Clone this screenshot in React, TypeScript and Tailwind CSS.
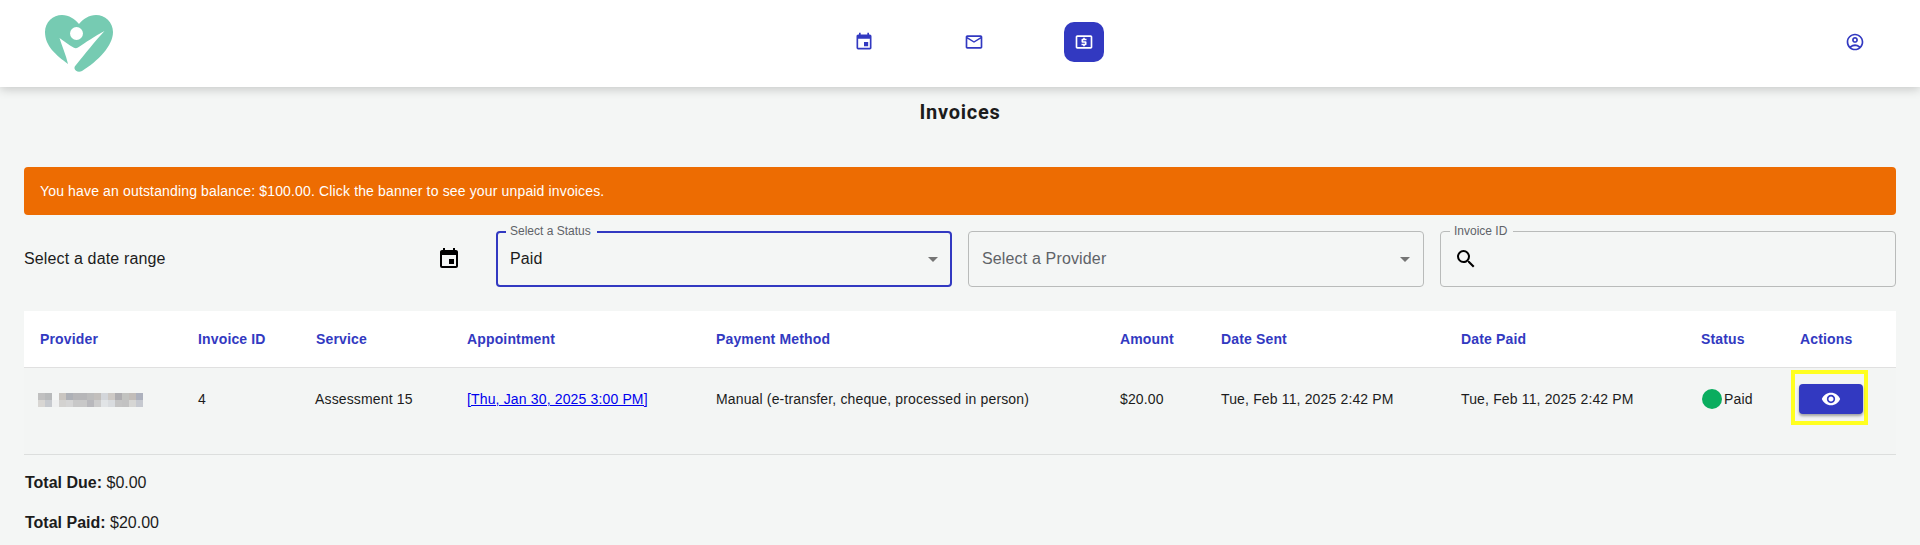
import { ReactNode } from "react";
import {
  MdEvent,
  MdMailOutline,
  MdOutlineLocalAtm,
  MdOutlineAccountCircle,
  MdSearch,
  MdArrowDropDown,
  MdVisibility,
} from "react-icons/md";

const topRow = [
  "bg-[#c0c0c0]", "bg-[#b8babb]", "bg-[#f4f6f5]", "bg-[#c9c5c0]", "bg-[#adb0b6]",
  "bg-[#b6b6b8]", "bg-[#b6b6b8]", "bg-[#bcbcbc]", "bg-[#c2bfbc]", "bg-[#d3d6da]",
  "bg-[#cdc9c5]", "bg-[#aeadb0]", "bg-[#c2c3c0]", "bg-[#c2bdb9]", "bg-[#adb1bd]",
];
const bottomRow = [
  "bg-[#d8d6d3]", "bg-[#c6c9ce]", "bg-[#eff0f0]", "bg-[#d3d2d0]", "bg-[#d5d5d5]",
  "bg-[#c8c8c8]", "bg-[#c8c8c8]", "bg-[#b8b8bc]", "bg-[#cccccc]", "bg-[#e1e4e6]",
  "bg-[#d9dcdf]", "bg-[#c4c4c4]", "bg-[#c2c2c2]", "bg-[#d6d6d4]", "bg-[#c6c9d0]",
];

const columns = [
  { label: "Provider", width: "w-[158px]" },
  { label: "Invoice ID", width: "w-[118px]" },
  { label: "Service", width: "w-[151px]" },
  { label: "Appointment", width: "w-[249px]" },
  { label: "Payment Method", width: "w-[404px]" },
  { label: "Amount", width: "w-[101px]" },
  { label: "Date Sent", width: "w-[240px]" },
  { label: "Date Paid", width: "w-[240px]" },
  { label: "Status", width: "w-[97px]" },
  { label: "Actions", width: "w-[114px]" },
];

function Logo() {
  return (
    <svg viewBox="44 15 72 60" className="w-[72px] h-[60px]">
      <path
        fill="#76cbb2"
        d="M68 65C56 56 45 47 45 33C45 23 53 16 62 16C69 16 75 20 79 25C83 20 89 16 96 16C105 16 113 23 113 33C113 47 98 62 82 72C79 73.5 75 72.5 74.5 69.5C74.3 68 75 67 76 66C85 55 95 42 104.5 32C95 37 85 44 78 48.5C76.5 49.5 75 49.5 73.5 48.5C69 46 64 42 59.5 39C62 47 66 56 68 65Z"
      />
      <circle cx="76.5" cy="34.5" r="6.5" fill="#ffffff" />
    </svg>
  );
}

function Outlined({ label, focused, children }: { label?: string; focused?: boolean; children: ReactNode }) {
  return (
    <div
      className={
        focused
          ? "relative h-14 rounded border-2 border-[#3239c1] flex items-center pl-[12px] pr-[5px]"
          : "relative h-14 rounded border border-[#b9bbba] flex items-center pl-[13px] pr-[6px]"
      }
    >
      {label && (
        <span
          className={
            focused
              ? "absolute -top-[10px] left-[8px] pl-[4px] pr-[6px] bg-[#f4f6f5] text-xs leading-4 text-[#5f6368]"
              : "absolute -top-[9px] left-[9px] pl-[4px] pr-[6px] bg-[#f4f6f5] text-xs leading-4 text-[#5f6368]"
          }
        >
          {label}
        </span>
      )}
      {children}
    </div>
  );
}

export default function App() {
  return (
    <div className="min-h-screen bg-[#f4f6f5] font-['Liberation_Sans',sans-serif] text-[#1c1c1c] overflow-hidden">
      <header className="relative h-[87px] bg-white shadow-[0_2px_10px_rgba(0,0,0,0.2)] flex items-center pl-[44px] pr-[55px]">
        <Logo />
        <nav className="absolute left-[844px] top-[22px] flex items-center text-[#3239c1]">
          <button className="w-10 h-10 flex items-center justify-center">
            <MdEvent size={20} />
          </button>
          <button className="ml-[70px] w-10 h-10 flex items-center justify-center">
            <MdMailOutline size={20} />
          </button>
          <button className="ml-[70px] w-10 h-10 rounded-[10px] bg-[#3239c1] text-white flex items-center justify-center">
            <MdOutlineLocalAtm size={20} />
          </button>
        </nav>
        <button className="ml-auto -mt-[3px] text-[#3239c1]">
          <MdOutlineAccountCircle size={20} />
        </button>
      </header>

      <main className="px-6">
        <div className="h-20 pt-[13px]">
          <h1 className="text-center text-[20px] leading-6 font-bold font-['Roboto',sans-serif] tracking-[0.75px]">Invoices</h1>
        </div>

        <div className="h-12 rounded bg-[#ed6c02] text-white text-sm tracking-[0.15px] flex items-center px-4 mb-4">
          You have an outstanding balance: $100.00. Click the banner to see your unpaid invoices.
        </div>

        <div className="grid grid-cols-4 gap-4 mb-6">
          <div className="h-14 flex items-center justify-between pr-[19px]">
            <span className="text-base tracking-[0.15px]">Select a date range</span>
            <MdEvent size={24} className="text-black" />
          </div>
          <Outlined label="Select a Status" focused>
            <span className="text-base tracking-[0.15px] flex-1">Paid</span>
            <MdArrowDropDown size={24} className="text-[#757575]" />
          </Outlined>
          <Outlined>
            <span className="text-base tracking-[0.15px] flex-1 text-[#5f6368]">Select a Provider</span>
            <MdArrowDropDown size={24} className="text-[#757575]" />
          </Outlined>
          <Outlined label="Invoice ID">
            <MdSearch size={24} className="text-black" />
          </Outlined>
        </div>

        <table className="w-full table-fixed border-collapse text-sm tracking-[0.15px]">
          <colgroup>
            {columns.map((c) => (
              <col key={c.label} className={c.width} />
            ))}
          </colgroup>
          <thead>
            <tr className="bg-white border-b border-[#e0e0e0] h-14">
              {columns.map((c) => (
                <th
                  key={c.label}
                  className={
                    c.label === "Actions"
                      ? "pl-[18px] pt-[1px] text-left font-bold text-sm text-[#3239c1]"
                      : "px-4 pt-[1px] text-left font-bold text-sm text-[#3239c1]"
                  }
                >
                  {c.label}
                </th>
              ))}
            </tr>
          </thead>
          <tbody>
            <tr className="border-b border-[#dcdedd] bg-[#f3f5f4] h-[87px] align-top">
              <td className="pl-[14px] pt-[25px]">
                <div className="flex">
                  {topRow.map((c, i) => (
                    <div key={i} className={`w-[7px] h-[7px] ${c}`} />
                  ))}
                </div>
                <div className="flex">
                  {bottomRow.map((c, i) => (
                    <div key={i} className={`w-[7px] h-[7px] ${c}`} />
                  ))}
                </div>
              </td>
              <td className="px-4 pt-[21px] leading-5">4</td>
              <td className="pl-[15px] pr-4 pt-[21px] leading-5">Assessment 15</td>
              <td className="px-4 pt-[21px] leading-5">
                <a href="#" className="text-[#0000ee] underline whitespace-nowrap">[Thu, Jan 30, 2025 3:00 PM]</a>
              </td>
              <td className="px-4 pt-[21px] leading-5">Manual (e-transfer, cheque, processed in person)</td>
              <td className="px-4 pt-[21px] leading-5">$20.00</td>
              <td className="px-4 pt-[21px] leading-5">Tue, Feb 11, 2025 2:42 PM</td>
              <td className="px-4 pt-[21px] leading-5">Tue, Feb 11, 2025 2:42 PM</td>
              <td className="pl-[17px] pt-[21px] leading-5">
                <div className="flex items-center gap-[2px]">
                  <span className="w-5 h-5 rounded-full bg-[#0aad5f]" />
                  Paid
                </div>
              </td>
              <td className="pl-[9px] pt-[2px]">
                <div className="inline-block border-4 border-[#ffff20] pl-[4px] pr-[1px] pt-[10px] pb-[7px]">
                  <button className="w-16 h-[30px] rounded bg-[#3239c1] text-white flex items-center justify-center shadow-[0_2px_3px_rgba(0,0,0,0.35)]">
                    <MdVisibility size={20} />
                  </button>
                </div>
              </td>
            </tr>
          </tbody>
        </table>

        <p className="mt-4 pl-[1px] leading-6 text-base"><strong className="font-bold">Total Due:</strong> $0.00</p>
        <p className="mt-4 pl-[1px] leading-6 text-base"><strong className="font-bold">Total Paid:</strong> $20.00</p>
      </main>
    </div>
  );
}
